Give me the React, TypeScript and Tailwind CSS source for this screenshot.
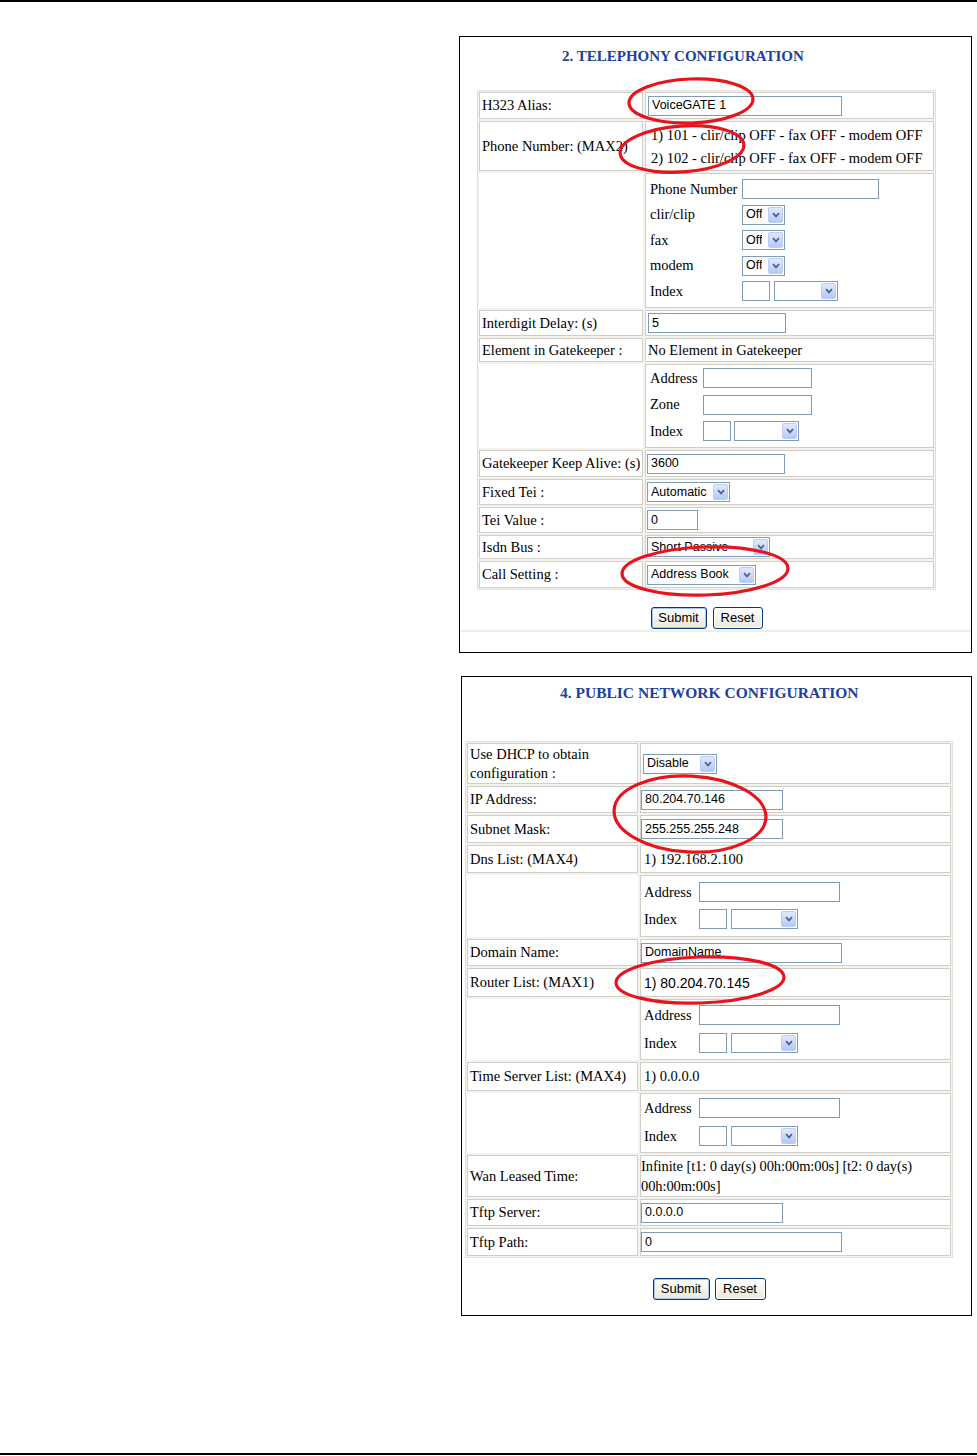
import React from 'react';

const serif = "font-['Liberation_Serif','Times_New_Roman',serif]";
const sans = "font-['Liberation_Sans',Arial,sans-serif]";

function TextBox({ className = '', value = '' }: { className?: string; value?: string }) {
  return (
    <div className={`h-[20px] shrink-0 border border-[#7f9db9] bg-white pl-[3px] flex items-center text-[12.5px] leading-none text-black whitespace-nowrap overflow-hidden ${sans} ${className}`}>
      {value}
    </div>
  );
}

function Dropdown({ className = '', value = '' }: { className?: string; value?: string }) {
  return (
    <div className={`h-[20px] shrink-0 border border-[#7f9db9] bg-white pl-[3px] pr-[1px] flex items-center justify-between text-[12.5px] leading-none text-black ${sans} ${className}`}>
      <span className="whitespace-nowrap overflow-hidden">{value}</span>
      <span className="w-[15px] h-[16px] shrink-0 rounded-[2px] border border-[#bccdf5] bg-linear-to-b from-[#e1e9fe] to-[#b4c8f8] flex items-center justify-center">
        <svg width="8" height="6" viewBox="0 0 8 6">
          <path d="M1 1.2 L4 4.4 L7 1.2" stroke="#4d6185" strokeWidth="1.7" fill="none" />
        </svg>
      </span>
    </div>
  );
}

function XpButton({ label, className = '', primary }: { label: string; className?: string; primary?: boolean }) {
  return (
    <div
      className={`h-[22px] rounded-[3px] border border-[#003c74] bg-linear-to-b from-white to-[#ece9d8] flex items-center justify-center text-[13px] text-black ${sans} ${
        primary ? 'shadow-[inset_0_0_0_1px_#a9c4ee]' : 'shadow-[inset_0_0_0_1px_#ffffff]'
      } ${className}`}
    >
      {label}
    </div>
  );
}

type RowProps = {
  label?: React.ReactNode;
  h: string;
  left: string;
  right: string;
  sub?: boolean;
  pad?: string;
  children?: React.ReactNode;
};

function Row({ label, h, left, right, sub, pad = 'pl-[2px]', children }: RowProps) {
  return (
    <div className={`flex gap-[2px] ${h}`}>
      <div className={`${left} shrink-0 flex items-center pl-[2px] ${sub ? 'bg-white' : 'border border-[#d0cec7] bg-white'}`}>{label}</div>
      <div className={`${right} shrink-0 border border-[#d0cec7] bg-white ${pad} ${sub ? 'flex flex-col' : 'flex items-center'}`}>
        {children}
      </div>
    </div>
  );
}

function SubLine({ label, lw, children }: { label: string; lw: string; children: React.ReactNode }) {
  return (
    <div className="flex items-center h-[20px]">
      <span className={`${lw} shrink-0`}>{label}</span>
      {children}
    </div>
  );
}

function IndexPicker({ gap = 'gap-[4px]', sel }: { gap?: string; sel: string }) {
  return (
    <div className={`flex ${gap}`}>
      <TextBox className="w-[28px]" />
      <Dropdown className={sel} />
    </div>
  );
}

function Telephony() {
  const L = 'w-[164px]';
  const R = 'w-[289px]';
  return (
    <div className="ml-[459px] mt-[34px] w-[513px] h-[617px] border border-black bg-white flex flex-col">
      <div className={`pl-[102px] pt-[11px] text-[15px] leading-[17px] font-bold text-[#20409f] ${serif}`}>2. TELEPHONY CONFIGURATION</div>

      <div className={`ml-[17px] mt-[25px] w-[459px] border border-[#e2e0da] bg-[#f4f3ef] p-[1px] flex flex-col gap-[2px] text-[14.5px] leading-none text-black ${serif}`}>
        <Row label="H323 Alias:" h="h-[27px]" left={L} right={R}>
          <TextBox className="w-[194px]" value="VoiceGATE 1" />
        </Row>
        <Row label="Phone Number: (MAX2)" h="h-[50px]" left={L} right={R} pad="pl-[5px]">
          <div className="flex flex-col gap-[9px] pt-[1px]">
            <span>1) 101 - clir/clip OFF - fax OFF - modem OFF</span>
            <span>2) 102 - clir/clip OFF - fax OFF - modem OFF</span>
          </div>
        </Row>
        <Row h="h-[135px]" left={L} right={R} sub pad="pl-[4px] pt-[5px]">
          <div className="flex flex-col gap-[5.5px]">
            <SubLine label="Phone Number" lw="w-[92px]">
              <TextBox className="w-[137px]" />
            </SubLine>
            <SubLine label="clir/clip" lw="w-[92px]">
              <Dropdown className="w-[43px]" value="Off" />
            </SubLine>
            <SubLine label="fax" lw="w-[92px]">
              <Dropdown className="w-[43px]" value="Off" />
            </SubLine>
            <SubLine label="modem" lw="w-[92px]">
              <Dropdown className="w-[43px]" value="Off" />
            </SubLine>
            <SubLine label="Index" lw="w-[92px]">
              <IndexPicker sel="w-[64px]" />
            </SubLine>
          </div>
        </Row>
        <Row label="Interdigit Delay: (s)" h="h-[26px]" left={L} right={R}>
          <TextBox className="w-[138px]" value="5" />
        </Row>
        <Row label="Element in Gatekeeper :" h="h-[24px]" left={L} right={R}>
          <span>No Element in Gatekeeper</span>
        </Row>
        <Row h="h-[84px]" left={L} right={R} sub pad="pl-[4px] pt-[3px]">
          <div className="flex flex-col gap-[6.5px]">
            <SubLine label="Address" lw="w-[53px]">
              <TextBox className="w-[109px]" />
            </SubLine>
            <SubLine label="Zone" lw="w-[53px]">
              <TextBox className="w-[109px]" />
            </SubLine>
            <SubLine label="Index" lw="w-[53px]">
              <IndexPicker gap="gap-[3px]" sel="w-[65px]" />
            </SubLine>
          </div>
        </Row>
        <Row label="Gatekeeper Keep Alive: (s)" h="h-[27px]" left={L} right={R} pad="pl-[1px]">
          <TextBox className="w-[138px]" value="3600" />
        </Row>
        <Row label="Fixed Tei :" h="h-[26px]" left={L} right={R} pad="pl-[1px]">
          <Dropdown className="w-[83px]" value="Automatic" />
        </Row>
        <Row label="Tei Value :" h="h-[26px]" left={L} right={R} pad="pl-[1px]">
          <TextBox className="w-[51px]" value="0" />
        </Row>
        <Row label="Isdn Bus :" h="h-[24px]" left={L} right={R} pad="pl-[1px]">
          <Dropdown className="w-[123px]" value="Short Passive" />
        </Row>
        <Row label="Call Setting :" h="h-[27px]" left={L} right={R} pad="pl-[1px]">
          <Dropdown className="w-[109px]" value="Address Book" />
        </Row>
      </div>

      <div className="ml-[17px] mt-[17px] w-[459px] flex justify-center gap-[6px]">
        <XpButton label="Submit" className="w-[56px]" primary />
        <XpButton label="Reset" className="w-[50px]" />
      </div>
      <div className="mt-[1px] h-[2px] bg-[#efeee9]" />
    </div>
  );
}

function PublicNetwork() {
  const L = 'w-[171px]';
  const R = 'w-[311px]';
  return (
    <div className="ml-[461px] mt-[23px] w-[511px] h-[640px] border border-black bg-white flex flex-col">
      <div className={`pl-[98px] pt-[7px] text-[15.5px] leading-[17px] font-bold text-[#20409f] ${serif}`}>4. PUBLIC NETWORK CONFIGURATION</div>

      <div className={`ml-[3px] mt-[40px] w-[488px] border border-[#e2e0da] bg-[#f4f3ef] p-[1px] flex flex-col gap-[2px] text-[14.5px] leading-none text-black ${serif}`}>
        <Row
          label={
            <span className="leading-[19px]">
              Use DHCP to obtain
              <br />
              configuration :
            </span>
          }
          h="h-[41px]"
          left={L}
          right={R}
        >
          <Dropdown className="w-[74px]" value="Disable" />
        </Row>
        <Row label="IP Address:" h="h-[27px]" left={L} right={R} pad="pl-0">
          <TextBox className="w-[142px]" value="80.204.70.146" />
        </Row>
        <Row label="Subnet Mask:" h="h-[28px]" left={L} right={R} pad="pl-0">
          <TextBox className="w-[142px]" value="255.255.255.248" />
        </Row>
        <Row label="Dns List: (MAX4)" h="h-[28px]" left={L} right={R} pad="pl-[3px]">
          <span>1) 192.168.2.100</span>
        </Row>
        <Row h="h-[62px]" left={L} right={R} sub pad="pl-[3px] pt-[6px]">
          <div className="flex flex-col gap-[7px]">
            <SubLine label="Address" lw="w-[55px]">
              <TextBox className="w-[141px]" />
            </SubLine>
            <SubLine label="Index" lw="w-[55px]">
              <IndexPicker sel="w-[67px]" />
            </SubLine>
          </div>
        </Row>
        <Row label="Domain Name:" h="h-[27px]" left={L} right={R} pad="pl-0">
          <TextBox className="w-[201px]" value="DomainName" />
        </Row>
        <Row label="Router List: (MAX1)" h="h-[29px]" left={L} right={R} pad="pl-[3px]">
          <span className={`text-[14px] ${sans}`}>1) 80.204.70.145</span>
        </Row>
        <Row h="h-[61px]" left={L} right={R} sub pad="pl-[3px] pt-[5px]">
          <div className="flex flex-col gap-[8px]">
            <SubLine label="Address" lw="w-[55px]">
              <TextBox className="w-[141px]" />
            </SubLine>
            <SubLine label="Index" lw="w-[55px]">
              <IndexPicker sel="w-[67px]" />
            </SubLine>
          </div>
        </Row>
        <Row label="Time Server List: (MAX4)" h="h-[29px]" left={L} right={R} pad="pl-[3px]">
          <span>1) 0.0.0.0</span>
        </Row>
        <Row h="h-[60px]" left={L} right={R} sub pad="pl-[3px] pt-[4px]">
          <div className="flex flex-col gap-[8px]">
            <SubLine label="Address" lw="w-[55px]">
              <TextBox className="w-[141px]" />
            </SubLine>
            <SubLine label="Index" lw="w-[55px]">
              <IndexPicker sel="w-[67px]" />
            </SubLine>
          </div>
        </Row>
        <Row label="Wan Leased Time:" h="h-[42px]" left={L} right={R} pad="pl-0">
          <span className="leading-[20px] tracking-[-0.1px]">
            Infinite [t1: 0 day(s) 00h:00m:00s] [t2: 0 day(s)
            <br />
            00h:00m:00s]
          </span>
        </Row>
        <Row label="Tftp Server:" h="h-[27px]" left={L} right={R} pad="pl-0">
          <TextBox className="w-[142px]" value="0.0.0.0" />
        </Row>
        <Row label="Tftp Path:" h="h-[28px]" left={L} right={R} pad="pl-0">
          <TextBox className="w-[201px]" value="0" />
        </Row>
      </div>

      <div className="ml-[3px] mt-[20px] w-[488px] flex justify-center gap-[5px]">
        <XpButton label="Submit" className="w-[57px]" primary />
        <XpButton label="Reset" className="w-[51px]" />
      </div>
    </div>
  );
}

function Annotations() {
  const stroke = { stroke: '#e8141c', strokeWidth: 3.2, fill: 'none' } as const;
  return (
    <svg className="absolute left-0 top-0 pointer-events-none" width="977" height="1456" viewBox="0 0 977 1456">
      <ellipse cx="691" cy="101" rx="62" ry="22" transform="rotate(-2 691 101)" {...stroke} />
      <ellipse cx="682" cy="149" rx="62" ry="23" transform="rotate(-4 682 149)" {...stroke} />
      <ellipse cx="705" cy="571" rx="83" ry="24" transform="rotate(-2 705 571)" {...stroke} />
      <ellipse cx="690" cy="814" rx="76" ry="38" transform="rotate(3 690 814)" {...stroke} />
      <ellipse cx="700" cy="980" rx="84" ry="23" transform="rotate(-2 700 980)" {...stroke} />
    </svg>
  );
}

export default function App() {
  return (
    <div className="relative w-[977px] h-[1456px] bg-white flex flex-col overflow-hidden">
      <div className="h-[2px] bg-black" />
      <Telephony />
      <PublicNetwork />
      <div className="mt-auto mb-[1px] h-[2px] bg-black" />
      <Annotations />
    </div>
  );
}
